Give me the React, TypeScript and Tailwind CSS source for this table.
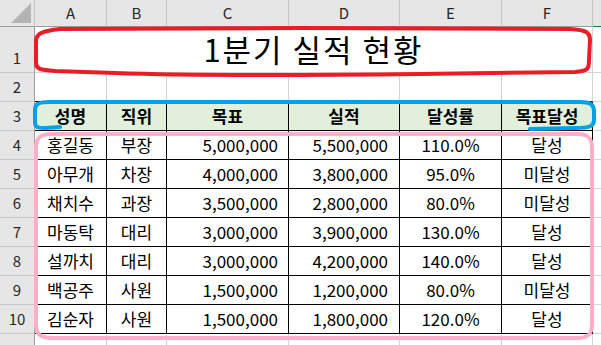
import type { ReactNode } from 'react';

const COLS = [
  { key: 'A', w: 'w-[72px]' },
  { key: 'B', w: 'w-[60px]' },
  { key: 'C', w: 'w-[122px]' },
  { key: 'D', w: 'w-[111px]' },
  { key: 'E', w: 'w-[102px]' },
  { key: 'F', w: 'w-[91px]' },
];

const HEAD = ['성명', '직위', '목표', '실적', '달성률', '목표달성'];

const ROWS = [
  ['홍길동', '부장', '5,000,000', '5,500,000', '110.0%', '달성'],
  ['아무개', '차장', '4,000,000', '3,800,000', '95.0%', '미달성'],
  ['채치수', '과장', '3,500,000', '2,800,000', '80.0%', '미달성'],
  ['마동탁', '대리', '3,000,000', '3,900,000', '130.0%', '달성'],
  ['설까치', '대리', '3,000,000', '4,200,000', '140.0%', '달성'],
  ['백공주', '사원', '1,500,000', '1,200,000', '80.0%', '미달성'],
  ['김순자', '사원', '1,500,000', '1,800,000', '120.0%', '달성'],
];

const align = ['justify-center', 'justify-center', 'justify-end pr-[10px]', 'justify-end pr-[11px]', 'justify-center', 'justify-center'];

function RowHead({ n, h }: { n?: number; h: string }) {
  return (
    <div className={`${h} w-[35px] shrink-0 bg-[#e6e6e6] border-r border-b border-r-[#9c9c9c] border-b-[#c6c6c6] flex items-end justify-center pb-[3px] text-[15px] text-[#262626]`}>
      {n}
    </div>
  );
}

function Cell({ w, h, cls, children }: { w: string; h: string; cls: string; children?: ReactNode }) {
  return <div className={`${w} ${h} shrink-0 flex items-center ${cls}`}>{children}</div>;
}

export default function App() {
  return (
    <div className="relative w-[601px] h-[345px] overflow-hidden bg-white text-black" style={{ fontFamily: '"Noto Sans CJK KR", "Noto Sans", sans-serif' }}>
      {/* column headers */}
      <div className="flex h-[27px]">
        <div className="w-[35px] shrink-0 h-full bg-[#e6e6e6] border-r border-b border-r-[#c6c6c6] border-b-[#9c9c9c] flex items-end justify-end pr-[3px] pb-[3px]">
          <svg width="20" height="20" viewBox="0 0 20 20">
            <polygon points="20,0 20,20 0,20" fill="#b4b4b4" />
          </svg>
        </div>
        {COLS.map((c) => (
          <div key={c.key} className={`${c.w} shrink-0 h-full bg-[#e6e6e6] border-r border-b border-r-[#c6c6c6] border-b-[#9c9c9c] flex items-center justify-center text-[15px] text-[#262626]`}>
            {c.key}
          </div>
        ))}
        <div className="flex-1 h-full bg-[#e6e6e6] border-b border-b-[#217346]" />
      </div>

      {/* row 1 title */}
      <div className="flex">
        <RowHead n={1} h="h-[46px]" />
        <div className="w-[558px] h-[46px] shrink-0 border-r border-b border-[#d4d4d4] flex items-center justify-center text-[31px] tracking-[2px]">
          1분기 실적 현황
        </div>
        <div className="flex-1 h-[46px] border-b border-[#d4d4d4]" />
      </div>

      {/* row 2 */}
      <div className="flex">
        <RowHead n={2} h="h-[29px]" />
        {COLS.map((c) => (
          <Cell key={c.key} w={c.w} h="h-[29px]" cls="border-r border-b border-r-[#d4d4d4] border-b-black" />
        ))}
        <div className="flex-1 h-[29px] border-b border-[#d4d4d4]" />
      </div>

      {/* row 3 header */}
      <div className="flex">
        <RowHead n={3} h="h-[29px]" />
        {COLS.map((c, i) => (
          <Cell key={c.key} w={c.w} h="h-[29px]" cls="border-r border-b border-black bg-[#e2efda] justify-center font-bold text-[17px]">
            {HEAD[i]}
          </Cell>
        ))}
        <div className="flex-1 h-[29px] border-b border-[#d4d4d4]" />
      </div>

      {/* data rows */}
      {ROWS.map((r, ri) => (
        <div key={ri} className="flex">
          <RowHead n={ri + 4} h="h-[29px]" />
          {COLS.map((c, i) => (
            <Cell key={c.key} w={c.w} h="h-[29px]" cls={`border-r border-b border-black text-[17px] ${align[i]}`}>
              {r[i]}
            </Cell>
          ))}
          <div className="flex-1 h-[29px] border-b border-[#d4d4d4]" />
        </div>
      ))}

      {/* row 11 */}
      <div className="flex">
        <RowHead h="h-[29px]" />
        {COLS.map((c) => (
          <Cell key={c.key} w={c.w} h="h-[29px]" cls="border-r border-b border-[#d4d4d4]" />
        ))}
      </div>

      {/* hand-drawn highlights */}
      <svg className="absolute inset-0 pointer-events-none" width="601" height="345" viewBox="0 0 601 345" fill="none" strokeLinejoin="round" strokeLinecap="round">
        <path d="M60 29 C 45 31 37 32 36 40 L 36 63 C 36 69 40 70 55 71 L 115 73 C 200 76 330 75 420 74 L 575 72 C 588 71 589 69 589 60 L 590 40 C 590 32 586 30 570 29 L 300 28 Z" stroke="#ed1c24" strokeWidth="4" />
        <path d="M50 102 C 38 102 35 104 35 110 L 35 122 C 35 127 37 128 45 128 L 60 127 M 50 102 L 580 102 C 590 102 594 104 594 112 L 594 120 C 594 126 590 128 575 128 L 530 129" stroke="#00a2e8" strokeWidth="4" />
        <path d="M52 134 C 40 134 36 138 36 148 L 36 324 C 36 334 40 338 52 338 L 578 338 C 588 338 592 334 592 324 L 592 148 C 592 138 588 134 578 134 Z" stroke="#ffaec9" strokeWidth="4" />
      </svg>
    </div>
  );
}
